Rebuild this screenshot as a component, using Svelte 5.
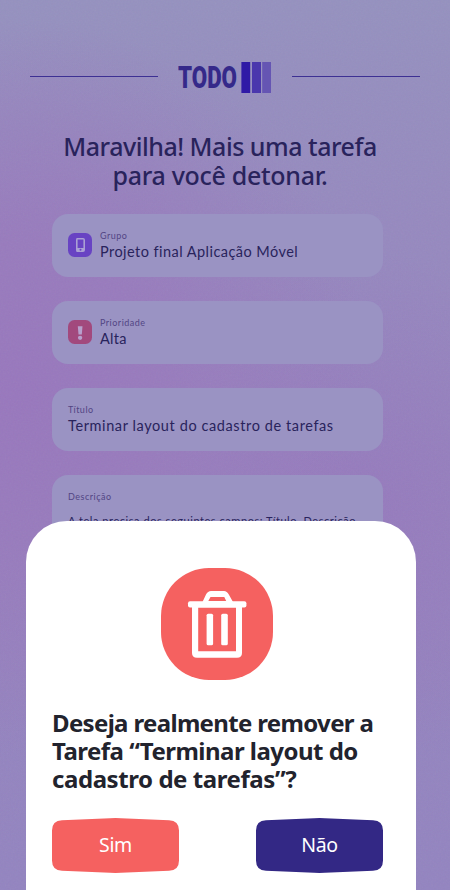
<script>
  const fields = [
    { label: 'Grupo', value: 'Projeto final Aplicação Móvel', icon: 'phone', fit: 'group' },
    { label: 'Prioridade', value: 'Alta', icon: 'alert', fit: 'priority' },
    { label: 'Título', value: 'Terminar layout do cadastro de tarefas', fit: 'title' }
  ];
  const actions = [
    { label: 'Sim', color: '#f56160' },
    { label: 'Não', color: '#332885' }
  ];
</script>

<div class="screen">
  <svg class="grain" width="450" height="890" aria-hidden="true">
    <filter id="noise" x="0" y="0" width="100%" height="100%">
      <feTurbulence type="fractalNoise" baseFrequency="0.6" numOctaves="2" seed="4" />
    </filter>
    <rect width="450" height="890" filter="url(#noise)" />
  </svg>

  <main>
    <header>
      <span class="rule"></span>
      <svg class="logo" width="94" height="44" viewBox="0 -6 94 44" role="img" aria-label="TODO">
        <text x="0" y="26.400" textLength="59" lengthAdjust="spacingAndGlyphs">TODO</text>
        <rect x="63.4" y="0" width="8.8" height="31" fill="#2f1aa6" />
        <rect x="74" y="0" width="9" height="31" fill="#4a37ad" />
        <rect x="84.2" y="0" width="8.8" height="31" fill="#6555b3" />
      </svg>
      <span class="rule"></span>
    </header>

    <h1>
      <span class="greeting">Maravilha! Mais uma tarefa</span>
      <span>para você detonar.</span>
    </h1>

    <div class="fields">
      {#each fields as field}
        <section class="card">
          {#if field.icon === 'phone'}
            <svg width="24" height="24" viewBox="0 0 24 24">
              <rect width="24" height="24" rx="6.5" fill="#6843c3" />
              <path fill="#aaa0d4" fill-rule="evenodd" d="M9 5h6q2 0 2 2v10q0 2-2 2H9q-1 0-1-2V7q0-2 1-2Zm.6 1.500v8.500h5.800V6.500Zm2.900 9.300a1 1 0 1 0 0 2a1 1 0 1 0 0-2Z" />
            </svg>
          {:else if field.icon === 'alert'}
            <svg width="24" height="24" viewBox="0 0 24 24">
              <rect width="24" height="24" rx="6.5" fill="#a2497d" />
              <path fill="#b7a0cc" d="M9.8 6.2h4.7l-.7 8.3h-3.3ZM12.1 15.7a2.2 2.1 0 1 1 0 4.2a2.2 2.1 0 1 1 0-4.2Z" />
            </svg>
          {/if}
          <div>
            <div class="label">{field.label}</div>
            <div class="value {field.fit}">{field.value}</div>
          </div>
        </section>
      {/each}
      <section class="card description">
        <div>
          <div class="label">Descrição</div>
          <p>A tela precisa dos seguintes campos: Título, Descrição</p>
        </div>
      </section>
    </div>
  </main>

  <div class="dialog" role="dialog" aria-modal="true">
    <svg class="trash" width="112" height="112" viewBox="0 0 112 112" aria-hidden="true">
      <rect width="112" height="112" rx="48" fill="#f56160" />
      <g fill="#fff">
        <path fill-rule="evenodd" d="M41.5 34L45 26.5Q46.8 23 50 23H63Q66 23 67.8 26.5L72 34V37H41.5ZM47.3 33H65.2L63.3 29H49.5Z" />
        <rect x="27" y="33.3" width="58.4" height="6.2" rx="2" />
        <path fill-rule="evenodd" d="M31 38H81V85Q81 89.8 76 89.8H36Q31 89.8 31 85ZM37.2 39.5V83.3H75V39.5Z" />
        <rect x="45.6" y="45.7" width="6.5" height="31.6" rx="1.6" />
        <rect x="60.2" y="45.7" width="6.6" height="31.6" rx="1.6" />
      </g>
    </svg>
    <h2>
      <span class="first">Deseja realmente remover a</span>
      <span class="second">Tarefa “Terminar layout do</span>
      <span>cadastro de tarefas”?</span>
    </h2>
    <div class="actions">
      {#each actions as action}
        <button>
          <svg width="127" height="55" viewBox="0 0 127 55" aria-hidden="true">
            <path fill={action.color} d="M10 2.2L58 .2Q63.500 -.1 69 .2L117 2.200Q127 2.600 127 12.500V42.500Q127 52.400 117 52.800L69 54.800Q63.500 55.100 58 54.800L10 52.800Q0 52.400 0 42.500V12.500Q0 2.600 10 2.200Z" />
          </svg>
          <span>{action.label}</span>
        </button>
      {/each}
    </div>
  </div>
</div>

<style>
  :global(body) { margin: 0; }
  .screen {
    position: relative;
    width: 450px;
    height: 890px;
    overflow: hidden;
    background:
      radial-gradient(ellipse 350px 370px at 20px 390px, #9877bd 0%, #987bbd 40%, rgba(151, 132, 191, 0) 100%),
      radial-gradient(ellipse 280px 260px at 350px 510px, #967abd 0%, rgba(151, 127, 191, 0) 100%),
      linear-gradient(180deg, #9591bf 0%, #9689bf 25%, #9585bf 60%, #9384c0 100%);
  }
  .grain { position: absolute; inset: 0; opacity: 0.06; }
  main { position: relative; display: flex; flex-direction: column; }
  header {
    display: flex;
    align-items: flex-start;
    padding: 56px 30px 0;
    height: 44px;
  }
  .rule { width: 128px; height: 1px; margin-top: 20px; background: #3d3093; flex: none; }
  .logo { margin: 0 20px; flex: none; }
  .logo text { font: 900 31px Roboto, sans-serif; fill: #35298a; }
  h1 {
    margin: 32px 0 0;
    padding-right: 10px;
    text-align: center;
    font: 500 25px/29px "Noto Sans", "Open Sans", sans-serif;
    letter-spacing: -0.3px;
    white-space: nowrap;
    color: #29235c;
  }
  h1 span, h2 span { display: block; }
  .greeting { letter-spacing: -0.48px; }
  .fields { display: flex; flex-direction: column; gap: 24px; padding: 24px 67px 0 52px; }
  .card {
    box-sizing: border-box;
    display: flex;
    align-items: flex-start;
    gap: 8px;
    height: 63px;
    padding: 16px;
    border-radius: 16px;
    background: #9a93c3;
    font-family: Lato, sans-serif;
    white-space: nowrap;
    color: #29235c;
  }
  .card > svg { margin-top: 3px; flex: none; }
  .label { font-size: 9px; line-height: 12px; letter-spacing: 0.5px; color: #524584; }
  .value { font-size: 14.5px; line-height: 20px; letter-spacing: 0.3px; }
  .value.group { letter-spacing: 0.45px; }
  .value.title { letter-spacing: 0.6px; }
  .description { height: 240px; }
  p { margin: 10px 0 0; font-size: 11px; line-height: 16px; letter-spacing: 0.55px; }
  .dialog {
    position: absolute;
    left: 26px;
    top: 521px;
    box-sizing: border-box;
    width: 390px;
    height: 369px;
    padding: 47px 33px 0 26px;
    border-radius: 41px 41px 0 0;
    background: #fff;
    display: flex;
    flex-direction: column;
  }
  .trash { align-self: center; margin-right: 1px; flex: none; }
  h2 {
    margin: 29px 0 0;
    font: 700 24px/28px "Noto Sans", "Open Sans", sans-serif;
    letter-spacing: -0.43px;
    white-space: nowrap;
    color: #22232d;
  }
  .first { letter-spacing: -0.66px; }
  .second { letter-spacing: -0.52px; }
  .actions { display: flex; justify-content: space-between; margin-top: 25px; }
  button {
    display: grid;
    place-items: center;
    width: 127px;
    height: 55px;
    padding: 0;
    border: 0;
    background: none;
    color: #fff;
    font: 400 19.5px/28px "Noto Sans", "Open Sans", sans-serif;
    letter-spacing: -0.4px;
  }
  button > * { grid-area: 1 / 1; }
  button span { margin-top: -1px; }
</style>
